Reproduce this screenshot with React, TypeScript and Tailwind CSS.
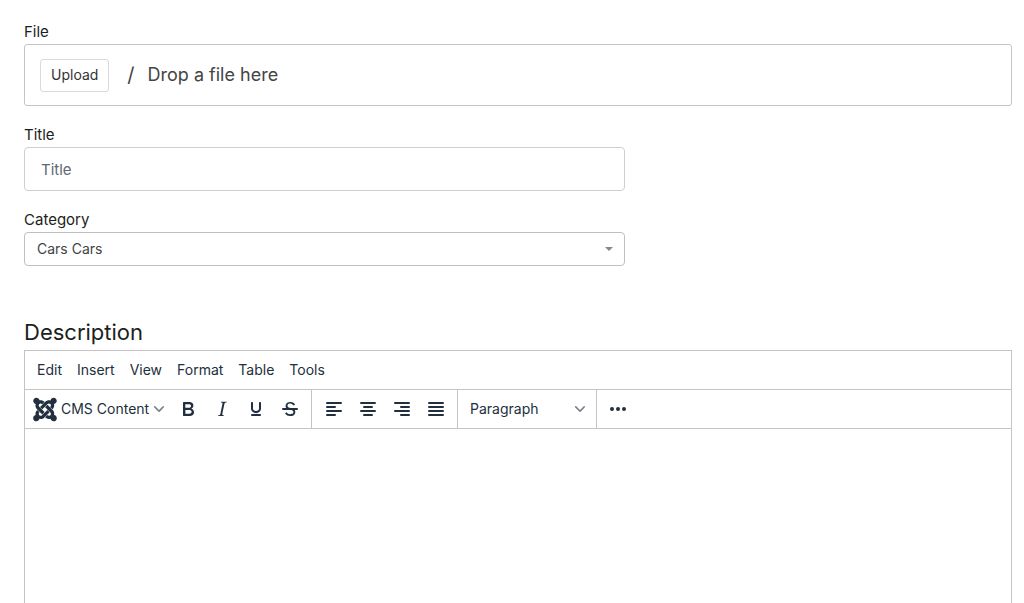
import { useState } from "react";
import type { ReactNode } from "react";
import { FaJoomla } from "react-icons/fa";

const menus = ["Edit", "Insert", "View", "Format", "Table", "Tools"];

const formats = [
  {
    label: "Bold",
    path: "M7.8 19c-.3 0-.5 0-.6-.2l-.2-.5V5.7c0-.2 0-.4.2-.5l.6-.2h5c1.5 0 2.7.3 3.5 1 .7.6 1.1 1.4 1.1 2.5a3 3 0 0 1-.6 1.9c-.4.6-1 1-1.6 1.2.4.1.9.3 1.3.6s.8.7 1 1.2c.4.4.5 1 .5 1.6 0 1.3-.4 2.3-1.3 3-.8.7-2.1 1-3.8 1H7.8Zm5-8.3c.6 0 1.2-.1 1.6-.5.4-.3.6-.7.6-1.3 0-1.1-.8-1.7-2.3-1.7H9.3v3.5h3.4Zm.5 6c.7 0 1.3-.1 1.7-.4.4-.4.6-.9.6-1.5s-.2-1-.7-1.4c-.4-.3-1-.4-2-.4H9.4v3.8h4Z",
  },
  {
    label: "Italic",
    path: "m16.7 4.7-.1.9h-.3c-.6 0-1 0-1.4.3-.3.3-.4.6-.5 1.1l-2.1 9.8v.6c0 .5.4.8 1.4.8h.2l-.2.8H8l.2-.8h.2c1.1 0 1.8-.5 2-1.5l2-9.8.1-.5c0-.6-.4-.8-1.4-.8h-.3l.2-.9h5.8Z",
  },
  {
    label: "Underline",
    path: "M16 5c.6 0 1 .4 1 1v5.5a4 4 0 0 1-.4 1.8l-1 1.4a5.3 5.3 0 0 1-5.5 1 5 5 0 0 1-1.6-1c-.5-.4-.8-.9-1.1-1.4a4 4 0 0 1-.4-1.8V6c0-.6.4-1 1-1s1 .4 1 1v5.5c0 .3 0 .6.2 1l.6.7a3.3 3.3 0 0 0 2.2.8 3.4 3.4 0 0 0 2.2-.8c.3-.2.4-.5.6-.8l.2-.9V6c0-.6.4-1 1-1ZM8 17h8c.6 0 1 .4 1 1s-.4 1-1 1H8a1 1 0 0 1 0-2Z",
  },
  {
    label: "Strikethrough",
    path: "M15.6 8.5c-.5-.7-1-1.1-1.3-1.3-.6-.4-1.3-.6-2-.6-2.7 0-2.8 1.7-2.8 2.1 0 1.6 1.8 2 3.2 2.3 4.4.9 4.6 2.8 4.6 3.9 0 1.4-.7 4.1-5 4.1A6.2 6.2 0 0 1 7 16.4l1.5-1.1c.4.6 1.6 2 3.7 2 1.6 0 2.5-.4 3-1.2.4-.8.3-2-.8-2.6-.7-.4-1.6-.7-2.9-1-1-.2-3.9-.8-3.9-3.6C7.6 6 10.3 5 12.4 5c2.9 0 4.2 1.6 4.7 2.4l-1.5 1.1ZM5 11h14a1 1 0 0 1 0 2H5a1 1 0 0 1 0-2Z",
  },
];

const aligns = [
  { label: "Align left", path: "M5 6h14M5 10h8M5 14h14M5 18h8" },
  { label: "Align center", path: "M5 6h14M8 10h8M5 14h14M8 18h8" },
  { label: "Align right", path: "M5 6h14M11 10h8M5 14h14M11 18h8" },
  { label: "Justify", path: "M5 6h14M5 10h14M5 14h14M5 18h14" },
];

function ToolButton({ label, children }: { label: string; children: ReactNode }) {
  return (
    <button type="button" aria-label={label} className="flex h-7 w-[34px] items-center justify-center rounded-sm hover:bg-slate-100">
      <svg viewBox="0 0 24 24" className="h-6 w-6" fill="currentColor">
        {children}
      </svg>
    </button>
  );
}

function Chevron({ className = "" }: { className?: string }) {
  return (
    <svg viewBox="0 0 10 10" className={`h-[10px] w-[10px] text-[#7a818a] ${className}`} fill="currentColor">
      <path d="M8.7 2.2c.3-.3.8-.3 1 0 .4.4.4.9 0 1.2L5.7 7.8c-.3.3-.9.3-1.2 0L.2 3.4a.8.8 0 0 1 0-1.2c.3-.3.8-.3 1.1 0L5 6l3.7-3.8Z" />
    </svg>
  );
}

export default function App() {
  const [title, setTitle] = useState("");
  const [category, setCategory] = useState("cars");
  const [block, setBlock] = useState("p");

  return (
    <form className="flex h-screen flex-col bg-white pt-5 pr-3 pl-6 font-['Inter',sans-serif] text-[#1c1e20]">
      <div className="mb-[17px]">
        <label htmlFor="upload" className="block text-[15px] leading-6">File</label>
        <div className="flex h-[62px] items-center rounded-[3px] border border-[#c4c4c4] px-[15px] text-[#444444]">
          <button id="upload" type="button" className="h-[33px] rounded-[3px] border border-[#d9d9d9] px-[10px] text-sm text-[#333333]">
            Upload
          </button>
          <span className="ml-[18px] text-xl">/</span>
          <span className="ml-[13px] text-lg">Drop a file here</span>
        </div>
      </div>

      <div className="mb-[17px]">
        <label htmlFor="title" className="block text-[15px] leading-6">Title</label>
        <input
          id="title"
          type="text"
          placeholder="Title"
          value={title}
          onChange={(e) => setTitle(e.target.value)}
          className="block h-11 w-full max-w-[601px] rounded border border-[#cfcfcf] px-4 text-[15px] placeholder:text-[#5f6972]"
        />
      </div>

      <div className="mb-12">
        <label htmlFor="category" className="block text-[15px] leading-6">Category</label>
        <div className="relative max-w-[601px]">
          <select
            id="category"
            value={category}
            onChange={(e) => setCategory(e.target.value)}
            className="block h-[34px] w-full appearance-none rounded border border-[#bfbfbf] px-3 text-sm text-[#444444]"
          >
            <option value="cars">Cars Cars</option>
          </select>
          <svg viewBox="0 0 8 4" className="pointer-events-none absolute top-[15px] right-3 h-1 w-2" fill="#888888">
            <path d="M0 0h8L4 4Z" />
          </svg>
        </div>
      </div>

      <h2 id="description" className="text-[22px] leading-9">Description</h2>
      <div className="flex min-h-0 flex-1 flex-col border border-b-0 border-[#c4c4c4] text-sm text-[#222f3e]">
        <div className="flex h-[39px] shrink-0 items-center gap-[15px] border-b border-[#c4c4c4] px-3">
          {menus.map((menu) => (
            <button key={menu} type="button" className="h-7 rounded-sm hover:bg-slate-100">
              {menu}
            </button>
          ))}
        </div>

        <div className="flex h-[39px] shrink-0 items-stretch divide-x divide-[#c4c4c4] border-b border-[#c4c4c4]">
          <div className="flex items-center px-1">
            <button type="button" className="flex h-7 w-[142px] items-center gap-1 rounded-sm pr-[7px] pl-1 whitespace-nowrap hover:bg-slate-100">
              <FaJoomla className="h-[27px] w-6 shrink-0" />
              CMS Content
              <Chevron className="ml-auto shrink-0" />
            </button>
            {formats.map((f) => (
              <ToolButton key={f.label} label={f.label}>
                <path d={f.path} />
              </ToolButton>
            ))}
          </div>

          <div className="flex items-center pr-1 pl-[5px]">
            {aligns.map((a) => (
              <ToolButton key={a.label} label={a.label}>
                <path d={a.path} fill="none" stroke="currentColor" strokeWidth={2} strokeLinecap="round" />
              </ToolButton>
            ))}
          </div>

          <div className="flex items-center px-1">
            <div className="relative">
              <select
                aria-label="Block format"
                value={block}
                onChange={(e) => setBlock(e.target.value)}
                className="block h-7 w-[130px] appearance-none rounded-sm px-2"
              >
                <option value="p">Paragraph</option>
              </select>
              <Chevron className="pointer-events-none absolute top-[9px] right-[7px]" />
            </div>
          </div>

          <div className="flex items-center px-1">
            <ToolButton label="More">
              <path d="M6 10a2 2 0 1 0 0 4 2 2 0 0 0 0-4Zm6 0a2 2 0 1 0 0 4 2 2 0 0 0 0-4Zm6 0a2 2 0 1 0 0 4 2 2 0 0 0 0-4Z" />
            </ToolButton>
          </div>
        </div>

        <textarea aria-labelledby="description" className="block w-full flex-1 resize-none p-4 outline-none" />
      </div>
    </form>
  );
}
